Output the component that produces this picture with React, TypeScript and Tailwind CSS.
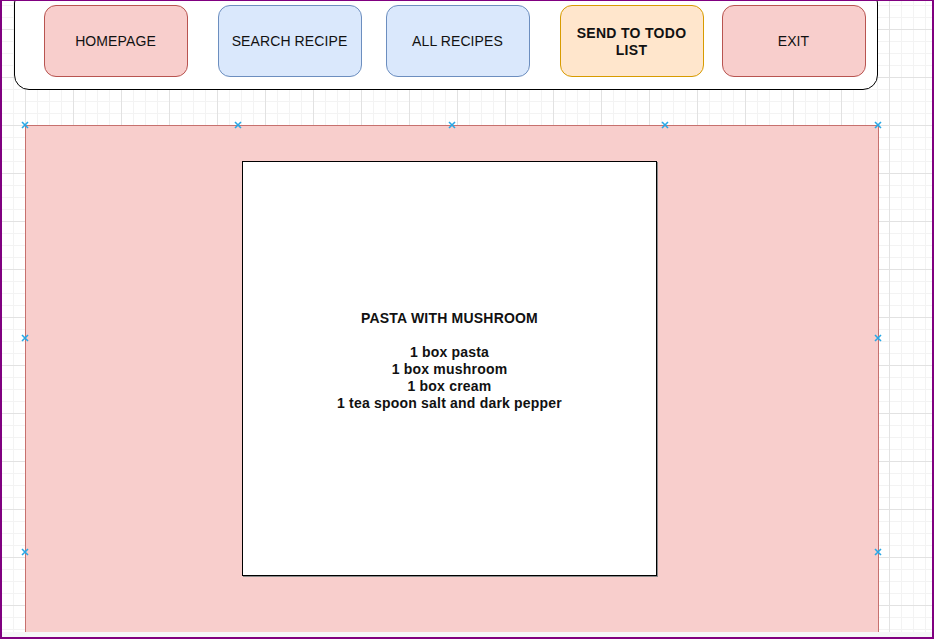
import React from 'react';

const font = { fontFamily: '"Liberation Sans", Arial, Helvetica, sans-serif' };

type NavItem = { label: string; tone: 'red' | 'blue' | 'orange'; bold?: boolean; gap: string };

const navItems: NavItem[] = [
  { label: 'HOMEPAGE', tone: 'red', gap: 'ml-[28.5px]' },
  { label: 'SEARCH RECIPE', tone: 'blue', gap: 'ml-[30px]' },
  { label: 'ALL RECIPES', tone: 'blue', gap: 'ml-[24px]' },
  { label: 'SEND TO TODO LIST', tone: 'orange', bold: true, gap: 'ml-[30px]' },
  { label: 'EXIT', tone: 'red', gap: 'ml-[18px]' },
];

const toneClass = {
  red: 'bg-[#f8cecc] border-[#b85450]',
  blue: 'bg-[#dae8fc] border-[#6c8ebf]',
  orange: 'bg-[#ffe6cc] border-[#d79b00]',
};

// little blue connection cross, like the canvas editor draws on a selected shape
const Cross = ({ x, y }: { x: number; y: number }) => (
  <svg
    className="absolute"
    style={{ left: x - 4, top: y - 4 }}
    width="8"
    height="8"
    viewBox="0 0 8 8"
  >
    <path d="M1 1L7 7M7 1L1 7" stroke="#29a8e6" strokeWidth="1.6" />
  </svg>
);

const quarter = 853 / 4;
const crossPoints = [
  [0, 0],
  [quarter, 0],
  [quarter * 2, 0],
  [quarter * 3, 0],
  [quarter * 4, 0],
  [0, quarter],
  [quarter * 4, quarter],
  [0, quarter * 2],
  [quarter * 4, quarter * 2],
];

const App: React.FC = () => {
  return (
    <div
      className="w-[934px] h-[639px] overflow-hidden border-[#800080] border-t border-l-2 border-r-2 border-b-2 flex flex-col bg-white"
      style={font}
    >
      <div className="h-[631px] overflow-hidden bg-white [background-image:linear-gradient(to_right,#e2e2e2_1px,transparent_1px),linear-gradient(to_bottom,#e2e2e2_1px,transparent_1px),linear-gradient(to_right,#f3f3f3_1px,transparent_1px),linear-gradient(to_bottom,#f3f3f3_1px,transparent_1px)] [background-size:48px_48px,48px_48px,12px_12px,12px_12px] [background-position:23px_28px,23px_28px,11px_4px,11px_4px]">
        {/* top toolbar */}
        <div className="ml-[12px] mt-[-13px] w-[864px] h-[102px] bg-white border-[1.5px] border-black rounded-[15px] flex items-start pt-[15.5px]">
          {navItems.map((item) => (
            <div
              key={item.label}
              className={`${item.gap} w-[144px] h-[72px] shrink-0 rounded-[12px] border-[1.3px] flex items-center justify-center text-center text-[14px] leading-[17px] text-[#111] pt-[2px] ${toneClass[item.tone]} ${
                item.bold ? 'font-bold px-[4px] tracking-[0.3px]' : 'tracking-[0.1px]'
              }`}
            >
              {item.label}
            </div>
          ))}
        </div>

        {/* recipe panel */}
        <div className="relative ml-[23px] mt-[35px] w-[854px] h-[853px] bg-[#f8cecc] border-[1.5px] border-[#c7716e]">
          <div className="ml-[216px] mt-[35px] w-[415px] h-[415px] bg-white border border-black shadow-[1px_1px_0_#8a8a8a] flex flex-col items-center justify-center text-center font-bold text-[14px] leading-[17px] text-[#111] pt-[2px] tracking-[0.2px]">
            <div>PASTA WITH MUSHROOM</div>
            <div className="h-[17px]" />
            <div>1 box pasta</div>
            <div>1 box mushroom</div>
            <div>1 box cream</div>
            <div>1 tea spoon salt and dark pepper</div>
            <div className="h-[17px]" />
          </div>
          {crossPoints.map(([x, y], i) => (
            <Cross key={i} x={Math.round(x) - 1} y={y - 1} />
          ))}
        </div>
      </div>
      <div className="flex-1 bg-[#f6f7f8]" />
    </div>
  );
};

export default App;
